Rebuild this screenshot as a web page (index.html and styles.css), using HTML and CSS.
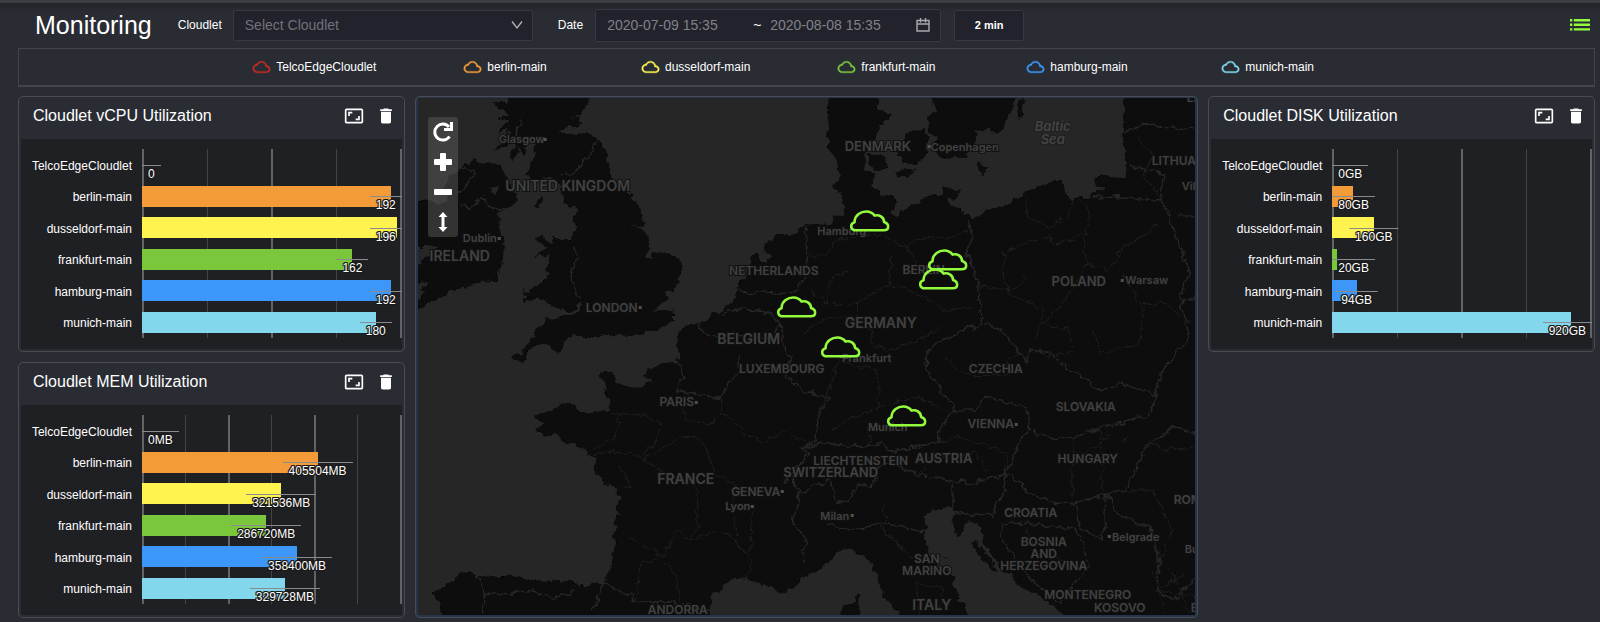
FILE: index.html
```html
<!DOCTYPE html>
<html lang="en">
<head>
<meta charset="utf-8">
<title>Monitoring</title>
<link rel="stylesheet" href="styles.css">
</head>
<body>
<svg class="sprite" aria-hidden="true">
  <symbol id="cloud" viewBox="-1 0 26 24"><path stroke="currentColor" stroke-width=".5" d="M19.35 10.04C18.67 6.59 15.64 4 12 4 9.11 4 6.6 5.64 5.35 8.04 2.34 8.36 0 10.91 0 14c0 3.31 2.69 6 6 6h13c2.76 0 5-2.24 5-5 0-2.64-2.05-4.78-4.65-4.96zM19 18H6c-2.21 0-4-1.79-4-4s1.79-4 4-4h.71C7.37 7.69 9.48 6 12 6c3.04 0 5.5 2.46 5.5 5.5v.5H19c1.66 0 3 1.34 3 3s-1.34 3-3 3z"/></symbol>
  <symbol id="expand" viewBox="0 0 24 24"><path d="M19 12h-2v3h-3v2h5v-5zM7 9h3V7H5v5h2V9zm14-6H3c-1.1 0-2 .9-2 2v14c0 1.1.9 2 2 2h18c1.1 0 2-.9 2-2V5c0-1.1-.9-2-2-2zm0 16.01H3V4.99h18v14.02z"/></symbol>
  <symbol id="trash" viewBox="0 0 24 24"><path d="M6 19c0 1.1.9 2 2 2h8c1.1 0 2-.9 2-2V7H6v12zM19 4h-3.5l-1-1h-5l-1 1H5v2h14V4z"/></symbol>
  <symbol id="pin" viewBox="0 0 40 22"><path d="M6.500 20.300C.5 20.300-.2 14 4.800 12.200L4.900 10.700C5.600 5 11 1.500 16.500 1.500 20 1.500 23 3 24.800 5.600 29 4.200 34.300 6.800 34.300 12 40.300 14 39.500 20.300 34 20.300Z" fill="none" stroke="#93fb3d" stroke-width="2.600" stroke-linejoin="round"/></symbol>
</svg>

<header class="toolbar">
  <h1 class="title">Monitoring</h1>
  <div class="field">
    <label for="cloudlet">Cloudlet</label>
    <div class="select-box">
      <select id="cloudlet"><option>Select Cloudlet</option></select>
      <svg class="chevron" viewBox="0 0 12 10"><path d="M1 1.500 6 8 11 1.500" fill="none" stroke="#b5b5ba" stroke-width="1.300"/></svg>
    </div>
  </div>
  <div class="field">
    <label for="from">Date</label>
    <div class="range">
      <input id="from" type="text" value="2020-07-09 15:35">
      <span class="tilde">~</span>
      <input type="text" aria-label="End date" value="2020-08-08 15:35">
      <svg class="calendar" viewBox="0 0 14 14"><path d="M1 2.500h12v10.500H1zM1 6h12M4.500 0v4.500M9.500 0v4.500" fill="none" stroke="#a9a9ad" stroke-width="1.400"/></svg>
    </div>
  </div>
  <button class="interval" type="button">2 min</button>
  <button class="menu" type="button" aria-label="Menu">
    <svg viewBox="0 0 20 12"><path d="M0 0h2.300v2.400H0zM3.800 0H20v2.400H3.800zM0 4.600h2.300V7H0zM3.800 4.600H20V7H3.800zM0 9.200h2.300v2.400H0zM3.800 9.200H20v2.400H3.800z"/></svg>
  </button>
</header>

<main class="page">
  <ul class="legend">
    <li><svg class="telco"><use href="#cloud"/></svg>TelcoEdgeCloudlet</li>
    <li><svg class="berlin"><use href="#cloud"/></svg>berlin-main</li>
    <li><svg class="dusseldorf"><use href="#cloud"/></svg>dusseldorf-main</li>
    <li><svg class="frankfurt"><use href="#cloud"/></svg>frankfurt-main</li>
    <li><svg class="hamburg"><use href="#cloud"/></svg>hamburg-main</li>
    <li><svg class="munich"><use href="#cloud"/></svg>munich-main</li>
  </ul>

  <div class="board">
    <section class="card">
      <div class="card-head">
        <h2>Cloudlet vCPU Utilization</h2>
        <button type="button" aria-label="Expand"><svg><use href="#expand"/></svg></button>
        <button type="button" aria-label="Delete"><svg><use href="#trash"/></svg></button>
      </div>
      <div class="chart">
        <div class="names"><span>TelcoEdgeCloudlet</span><span>berlin-main</span><span>dusseldorf-main</span><span>frankfurt-main</span><span>hamburg-main</span><span>munich-main</span></div>
        <div class="plot">
          <div class="grid-lines"><i></i><i></i><i></i><i></i></div>
          <div class="row"><b class="at-start">0</b></div>
          <div class="row"><div class="bar berlin" style="width:96%"></div><b class="at-end">192</b></div>
          <div class="row"><div class="bar dusseldorf" style="width:98%"></div><b class="at-end">196</b></div>
          <div class="row"><div class="bar frankfurt" style="width:81%"></div><b style="left:81%">162</b></div>
          <div class="row"><div class="bar hamburg" style="width:96%"></div><b class="at-end">192</b></div>
          <div class="row"><div class="bar munich" style="width:90%"></div><b style="left:90%">180</b></div>
        </div>
      </div>
    </section>

    <section class="map" aria-label="Map">
      <svg class="map-art" viewBox="0 0 778 517" preserveAspectRatio="xMidYMid slice">
        <defs>
          <filter id="rough" x="0" y="0" width="100%" height="100%">
            <feTurbulence type="fractalNoise" baseFrequency="0.12" numOctaves="3" seed="4" result="n"/>
            <feDisplacementMap in="SourceGraphic" in2="n" scale="9" xChannelSelector="R" yChannelSelector="G"/>
          </filter>
        </defs>
        <rect width="778" height="517" fill="#262626"/>
        <g filter="url(#rough)">
        <g transform="scale(.33333) translate(-24 -24)">
          <g fill="#080808">
            <path d="M300 0 285 40 250 38 285 62 300 72 265 88 300 95 275 110 262 130 300 118 290 150 268 165 255 178 290 170 305 140 325 105 350 60 332 105 314 140 318 165 302 205 315 212 330 165 338 205 350 190 345 160 365 155 380 190 365 215 358 240 345 260 365 272 400 262 440 270 455 290 452 318 475 345 502 350 500 375 488 385 500 420 480 448 430 445 420 462 405 470 385 450 375 438 400 435 420 460 400 480 375 500 420 492 412 540 420 555 395 580 340 605 350 620 345 635 400 625 430 650 470 665 500 650 530 625 500 665 480 680 410 683 405 705 385 715 370 745 330 785 300 803 345 815 365 775 395 755 420 765 445 790 460 770 460 750 490 738 530 745 575 735 600 735 610 748 625 735 680 738 735 718 770 708 795 690 795 665 760 660 725 662 750 645 775 625 768 612 800 590 818 540 812 510 775 490 735 488 720 505 703 495 722 470 718 440 695 415 650 403 705 410 690 355 660 310 605 265 590 180 555 145 515 125 500 135 440 125 475 115 520 100 505 80 480 95 520 60 548 10Z"/>
            <path d="M0 332 60 335 90 345 110 330 105 300 125 255 160 230 195 208 220 220 270 222 290 250 290 275 320 310 320 335 290 360 265 370 275 385 268 410 285 480 270 540 262 572 200 575 180 590 130 600 90 625 0 665 0 640 50 605 24 600 60 575 0 580 0 535 45 510 80 470 0 465Z"/>
            <path d="M370 360 382 330 400 318 398 340Z"/>
            <path d="M1260 0 1255 180 1275 200 1290 265 1270 290 1300 330 1308 380 1270 380 1265 400 1190 405 1150 430 1100 435 1070 460 1068 490 1085 498 1070 520 1040 490 1025 505 1020 525 1005 560 975 600 985 620 955 640 930 665 900 680 870 698 815 715 805 740 805 805 775 818 710 840 705 865 735 870 690 888 650 885 620 880 605 845 570 848 580 875 590 895 597 945 605 958 565 960 515 970 490 940 440 950 375 975 375 985 405 1000 380 1018 405 1040 440 1035 480 1060 540 1080 528 1090 555 1105 555 1140 580 1175 620 1195 630 1230 615 1250 640 1275 620 1270 612 1370 600 1440 580 1480 530 1483 450 1470 400 1475 300 1458 200 1460 170 1445 140 1455 130 1475 65 1510 80 1525 90 1545 105 1600 900 1600 905 1520 940 1490 975 1460 1010 1470 1050 1480 1110 1505 1150 1495 1170 1468 1225 1440 1270 1400 1300 1377 1340 1385 1385 1420 1400 1450 1415 1490 1418 1520 1450 1550 1490 1600 1690 1600 1640 1510 1630 1460 1560 1395 1540 1340 1555 1310 1535 1285 1560 1265 1610 1250 1640 1265 1625 1290 1630 1310 1650 1340 1680 1285 1710 1310 1720 1350 1760 1420 1820 1470 1880 1510 1990 1600 2380 1600 2380 0 2140 0 2140 150 2150 225 2150 260 2060 262 2060 290 2090 290 2030 325 1980 325 1965 300 1955 270 1910 280 1850 305 1805 340 1730 365 1685 385 1640 350 1610 340 1625 310 1600 310 1550 320 1510 345 1470 370 1440 375 1460 350 1455 320 1410 310 1385 285 1395 250 1365 240 1360 200 1390 160 1405 125 1410 100 1440 90 1445 70 1405 60 1400 0Z"/>
            <path d="M1555 0 1580 60 1555 80 1555 115 1580 145 1570 180 1600 207 1670 200 1700 150 1695 120 1775 125 1800 70 1830 0ZM1490 130 1540 118 1560 135 1550 175 1545 205 1520 225 1480 220 1465 190 1490 160ZM1375 190 1425 200 1435 235 1405 240 1375 220ZM1455 245 1515 235 1500 265 1460 262ZM1705 218 1735 235 1725 250 1705 240ZM1828 90 1822 50 1840 20 1850 30ZM1290 1575 1300 1548 1340 1538 1335 1513 1348 1510 1350 1600ZM1600 290 1650 300 1640 330 1600 325Z"/>
            <path d="M1680 1360 1700 1350 1760 1440 1750 1445ZM1800 1460 1860 1490 1890 1515 1850 1500Z"/>
          </g>
          <g fill="#262626"><path d="M245 290 270 285 262 308 248 305ZM2120 1062 2150 1045 2180 1030 2150 1048Z"/></g>
          <g fill="none" stroke="#262626" stroke-width="5" stroke-linejoin="round">
            <path d="M150 345 185 355 215 320 240 355 290 365M160 230 195 250 165 290 145 310M455 255 490 250 545 190 555 150M490 470 510 500 485 530 490 590 515 630"/>
            <path d="M1190 410 1192 490 1180 570 1150 610 1040 610 975 600M870 700 880 735 950 740 1010 735 1085 745 1110 700 1080 670 1010 655 935 670M1110 700 1120 760 1145 800 1130 865 1190 905 1260 925 1230 960 1215 1060 1170 1075 1200 1090 1120 1180 1140 1160 1170 1200 1150 1300 1190 1350 1180 1420M795 800 820 860 800 905 870 910 935 925 955 880 985 850 985 800"/>
            <path d="M1180 1075 1250 1060 1350 1070 1420 1060 1440 1080 1500 1075 1585 1055 1590 1020 1620 970 1640 960 1550 840 1550 800M1170 1210 1260 1170 1280 1240 1320 1230 1340 1180 1390 1190 1410 1120 1450 1120 1530 1155 1640 1175 1690 1180 1790 1150 1830 1050 1860 1020 1850 955 1780 930 1725 920 1700 960 1640 960"/>
            <path d="M1675 390 1685 430 1670 490 1700 560 1710 650 1720 690 1690 720 1690 705 1620 740 1560 770 1550 800M1720 700 1770 720 1820 770 1850 820 1860 780 1920 790 1970 830 2020 860 2070 900 2130 880 2240 915 2215 975 2080 1010 2000 1040 1910 1045 1870 1020M2240 915 2250 850 2340 740 2310 620 2340 550 2300 440 2260 330 2050 320M2255 330 2260 250 2155 225M2140 130 2200 100 2270 115 2360 115M2305 378 2360 378M2310 640 2360 620"/>
            <path d="M1790 1150 1850 1200 1920 1240 1990 1240 2100 1210 2150 1200 2210 1070 2290 1010 2360 1030M1630 1180 1630 1270 1750 1275 1780 1210 1790 1150M1780 1300 1850 1300 2000 1320 2020 1360 2040 1430 2000 1470 1950 1540 1900 1500 1850 1450 1780 1360 1775 1300M2000 1240 2010 1310 2080 1350 2090 1210M2090 1210 2130 1280 2220 1310 2250 1420 2240 1500 2290 1530 2360 1460"/>
            <path d="M580 1480 640 1510 690 1535 770 1535 850 1550 905 1560M200 1460 225 1510 215 1570M225 1515 300 1510 370 1500 430 1525 500 1500M550 1560 580 1480M1250 1300 1310 1320 1430 1300 1530 1325 1550 1320"/>
          </g>
          <g fill="none" stroke="#1c1c1c" stroke-width="4" stroke-linejoin="round">
            <path d="M605 970 700 975 755 1000 740 1050 700 1100 600 1085 540 1095M625 970 620 1040 550 1080M700 1105 830 1035 890 1065 910 1150 970 1180 965 1250 985 1340M700 1105 750 1145 850 1180 870 1240 860 1320 840 1350 800 1320 760 1400 690 1420 680 1530M760 1405 800 1460 810 1540M860 1350 900 1330 950 1330 1010 1390 1025 1420 1010 1470M1020 1390 1030 1250M935 920 935 970 900 1005 830 985 810 930M940 970 1010 1030 1060 1060 1120 1020 1200 1060M635 1125 660 1190 620 1195M655 1340 760 1400"/>
            <path d="M1190 490 1240 500 1280 450 1370 435 1430 440 1500 480 1520 520M1450 500 1440 580 1340 640 1250 640 1190 590M1340 640 1340 690 1270 680 1180 730M1440 580 1560 625 1600 660 1700 650M1250 650 1270 560 1310 545M1490 480 1510 450 1640 440 1675 420M1380 690 1390 770 1440 780 1530 750 1600 710M1300 820 1400 840 1410 950 1300 1000 1260 1025M1230 960 1260 900 1290 800M1370 990 1380 1060M1410 950 1530 920 1600 960"/>
            <path d="M1850 305 1850 380 1920 410 1975 380 1990 330M1785 480 1780 580 1820 620 1900 660 1880 740M1790 480 1910 440 1950 460 2030 430 2040 350 2010 330M2020 440 2030 520 2100 540 2140 470 2260 400M2030 520 1960 640 1900 700M2140 550 2200 660 2190 760 2070 790 2050 720M1900 700 1980 720 1990 790 1900 800M1700 590 1800 600 1850 560M2190 640 2270 640 2340 700M2260 330 2200 260 2230 200 2180 140M1600 800 1680 860 1760 860 1850 840M1760 850 1830 790 1800 750"/>
            <path d="M1990 1050 1990 1220M2070 1000 2080 1200M1990 1110 2100 1040M1580 1060 1640 1040 1720 1060 1790 1090 1790 1140M1530 1155 1560 1110 1700 1090 1730 1150M2150 1200 2230 1200 2290 1320 2250 1400M2200 1060 2280 1080 2360 1070M2240 1500 2330 1450M1420 1230 1430 1300M1400 1300 1500 1400 1620 1400M1530 1575 1520 1480 1600 1490 1590 1570M1850 1320 1890 1400 2020 1420M2230 1440 2270 1570M2280 1430 2340 1570M2230 1500 2360 1520"/>
          </g>
        </g>
        </g>
        <g class="country">
          <text x="150" y="93" class="large">UNITED KINGDOM</text><text x="42" y="163" class="large">IRELAND</text>
          <text x="194" y="214">LONDON</text><text x="356" y="177">NETHERLANDS</text>
          <text x="331" y="246" class="large">BELGIUM</text><text x="460" y="53" class="medium">DENMARK</text>
          <text x="661" y="188" class="medium">POLAND</text><text x="463" y="230" class="large">GERMANY</text>
          <text x="578" y="275">CZECHIA</text><text x="364" y="275">LUXEMBOURG</text>
          <text x="668" y="313">SLOVAKIA</text><text x="573" y="330">VIENNA</text>
          <text x="443" y="367">LIECHTENSTEIN</text><text x="413" y="379" class="medium">SWITZERLAND</text>
          <text x="526" y="365" class="medium">AUSTRIA</text><text x="670" y="365">HUNGARY</text>
          <text x="259" y="308">PARIS</text><text x="268" y="386" class="large">FRANCE</text>
          <text x="338" y="398">GENEVA</text><text x="613" y="419">CROATIA</text>
          <text x="626" y="448">BOSNIA</text><text x="626" y="460">AND</text><text x="626" y="472">HERZEGOVINA</text>
          <text x="509" y="465">SAN</text><text x="509" y="477">MARINO</text>
          <text x="514" y="512" class="large">ITALY</text><text x="670" y="501">MONTENEGRO</text>
          <text x="702" y="514">KOSOVO</text><text x="260" y="516">ANDORRA</text><text x="506" y="176">BERLIN</text>
          <text x="734" y="67" class="cut">LITHUANIA</text><text x="769" y="4" class="cut">LATVIA</text>
          <text x="756" y="406" class="cut">ROMANIA</text><text x="773" y="514" class="cut">BULGARIA</text>
        </g>
        <g class="city">
          <text x="104" y="45">Glasgow</text><text x="62" y="144">Dublin</text><text x="547" y="53">Copenhagen</text>
          <text x="424" y="137">Hamburg</text><text x="729" y="186">Warsaw</text><text x="449" y="264">Frankfurt</text>
          <text x="470" y="333">Munich</text><text x="320" y="412">Lyon</text><text x="417" y="422">Milan</text>
          <text x="718" y="443">Belgrade</text><text x="764" y="92" class="cut">Vilnius</text><text x="767" y="455" class="cut">Bucharest</text>
        </g>
        <g class="sea"><text x="635" y="33">Baltic</text><text x="635" y="46">Sea</text></g>
        <path fill="#505050" d="M126 40h3v3h-3zM80 139h3v3h-3zM221 208h3v3h-3zM510 47h3v3h-3zM703 181h3v3h-3zM597 325h3v3h-3zM277 303h3v3h-3zM363 392h3v3h-3zM333 407h3v3h-3zM433 416h3v3h-3zM690 437h3v3h-3zM422 257h3v3h-3z"/>
        <use href="#pin" x="432" y="112" width="40" height="22"/>
        <use href="#pin" x="510" y="151" width="40" height="22"/>
        <use href="#pin" x="501" y="170" width="40" height="22"/>
        <use href="#pin" x="359" y="198" width="40" height="22"/>
        <use href="#pin" x="403" y="238" width="40" height="22"/>
        <use href="#pin" x="469" y="307" width="40" height="22"/>
      </svg>
      <div class="map-tools">
        <button type="button" aria-label="Reset"><svg viewBox="0 0 20 20"><path d="M16.500 14.500A8 8 0 1 1 16 5" fill="none" stroke="#fff" stroke-width="3"/><path d="M17 0h3v9h-9V6h6z"/></svg></button>
        <button type="button" aria-label="Zoom in"><svg viewBox="0 0 20 20"><path d="M8 1h4a1 1 0 0 1 1 1v5h5a1 1 0 0 1 1 1v4a1 1 0 0 1-1 1h-5v5a1 1 0 0 1-1 1H8a1 1 0 0 1-1-1v-5H2a1 1 0 0 1-1-1V8a1 1 0 0 1 1-1h5V2a1 1 0 0 1 1-1z"/></svg></button>
        <button type="button" aria-label="Zoom out"><svg viewBox="0 0 20 20"><rect x="1" y="7" width="18" height="6" rx="1"/></svg></button>
        <button type="button" aria-label="Tilt"><svg viewBox="0 0 20 20"><path d="M10 0l4.500 5h-3v10h3L10 20l-4.500-5h3V5h-3z"/></svg></button>
      </div>
    </section>

    <section class="card">
      <div class="card-head">
        <h2>Cloudlet DISK Utilization</h2>
        <button type="button" aria-label="Expand"><svg><use href="#expand"/></svg></button>
        <button type="button" aria-label="Delete"><svg><use href="#trash"/></svg></button>
      </div>
      <div class="chart">
        <div class="names"><span>TelcoEdgeCloudlet</span><span>berlin-main</span><span>dusseldorf-main</span><span>frankfurt-main</span><span>hamburg-main</span><span>munich-main</span></div>
        <div class="plot">
          <div class="grid-lines"><i></i><i></i><i></i><i></i></div>
          <div class="row"><b class="at-start">0GB</b></div>
          <div class="row"><div class="bar berlin" style="width:8%"></div><b class="at-start">80GB</b></div>
          <div class="row"><div class="bar dusseldorf" style="width:16%"></div><b style="left:16%">160GB</b></div>
          <div class="row"><div class="bar frankfurt" style="width:2%"></div><b class="at-start">20GB</b></div>
          <div class="row"><div class="bar hamburg" style="width:9.4%"></div><b style="left:9.4%">94GB</b></div>
          <div class="row"><div class="bar munich" style="width:92%"></div><b class="at-end">920GB</b></div>
        </div>
      </div>
    </section>

    <section class="card">
      <div class="card-head">
        <h2>Cloudlet MEM Utilization</h2>
        <button type="button" aria-label="Expand"><svg><use href="#expand"/></svg></button>
        <button type="button" aria-label="Delete"><svg><use href="#trash"/></svg></button>
      </div>
      <div class="chart">
        <div class="names"><span>TelcoEdgeCloudlet</span><span>berlin-main</span><span>dusseldorf-main</span><span>frankfurt-main</span><span>hamburg-main</span><span>munich-main</span></div>
        <div class="plot">
          <div class="grid-lines"><i></i><i></i><i></i><i></i><i></i><i></i></div>
          <div class="row"><b class="at-start">0MB</b></div>
          <div class="row"><div class="bar berlin" style="width:67.6%"></div><b style="left:67.6%">405504MB</b></div>
          <div class="row"><div class="bar dusseldorf" style="width:53.6%"></div><b style="left:53.6%">321536MB</b></div>
          <div class="row"><div class="bar frankfurt" style="width:47.8%"></div><b style="left:47.8%">286720MB</b></div>
          <div class="row"><div class="bar hamburg" style="width:59.7%"></div><b style="left:59.7%">358400MB</b></div>
          <div class="row"><div class="bar munich" style="width:55%"></div><b style="left:55%">329728MB</b></div>
        </div>
      </div>
    </section>
  </div>
</main>
</body>
</html>
```
FILE: styles.css
```css
* { box-sizing: border-box; }

body {
  margin: 0;
  background: #292c33;
  color: #fff;
  font-family: "Liberation Sans", Arial, sans-serif;
  font-size: 12px;
}

button {
  margin: 0;
  padding: 0;
  border: 0;
  background: none;
  color: inherit;
  font: inherit;
  cursor: pointer;
}

svg { display: block; fill: currentColor; }
.sprite { position: absolute; width: 0; height: 0; }

/* Toolbar */
.toolbar {
  display: flex;
  align-items: center;
  height: 48px;
  padding: 0 10px 1px 35px;
  border-top: 3px solid #3b3e43;
  background: linear-gradient(#202328, #292c33 8px);
}
.title { margin: 0 26px 0 0; font-size: 25px; font-weight: 400; line-height: 30px; }
.field { display: flex; align-items: center; gap: 11px; margin-right: 25px; }
.field + .field { gap: 12px; margin-right: 13px; }

.select-box { position: relative; width: 300px; }
.select-box select {
  display: block;
  width: 100%;
  height: 31px;
  padding: 0 11px;
  border: 1px solid #383843;
  border-radius: 2px;
  appearance: none;
  background: #22222c;
  color: #717178;
  font: 14px "Liberation Sans", Arial, sans-serif;
}
.chevron { position: absolute; top: 10px; right: 10px; width: 12px; height: 10px; pointer-events: none; }

.range {
  display: flex;
  align-items: center;
  width: 346px;
  height: 33px;
  padding: 0 10px 0 11px;
  border: 1px solid #383843;
  border-radius: 2px;
  background: #22222c;
}
.range input {
  flex: 1;
  min-width: 0;
  padding: 0;
  border: 0;
  background: none;
  color: #818187;
  font: 14px "Liberation Sans", Arial, sans-serif;
}
.tilde { width: 17px; font-size: 14px; }
.calendar { width: 14px; height: 14px; }
.interval {
  width: 70px;
  height: 31px;
  border: 1px solid #383843;
  border-radius: 2px;
  background: #22222c;
  font-size: 11px;
  font-weight: 700;
}
.menu { margin-left: auto; color: #93fb3d; }
.menu svg { width: 20px; height: 12px; }

/* Series colours */
.telco { color: #c22d22; }
.berlin { color: #f29b38; }
.dusseldorf { color: #fff350; }
.frankfurt { color: #7ac73c; }
.hamburg { color: #3d97f8; }
.munich { color: #82d7ec; }

.page { padding: 0 5px 4px 18px; }

.legend {
  display: grid;
  grid-template-columns: repeat(6, 1fr);
  align-items: center;
  height: 39px;
  margin: 0 0 9px;
  padding: 0 231px 0 200px;
  border: 1px solid #434548;
  border-bottom-width: 2px;
  list-style: none;
}
.legend li { display: flex; align-items: center; justify-content: center; gap: 5px; }
.legend svg { width: 19px; height: 18px; }

/* Board */
.board {
  display: grid;
  grid-template-columns: 387fr 784fr 387fr;
  grid-template-rows: auto auto;
  gap: 10px;
}
.card {
  min-width: 0;
  padding: 2px;
  border: 1px solid #4a4c51;
  border-radius: 5px;
}
.card-head {
  display: flex;
  align-items: center;
  gap: 12px;
  height: 40px;
  padding: 0 6px 6px 12px;
}
.card-head h2 { flex: 1; margin: 0; font-size: 16px; font-weight: 400; }
.card-head svg { width: 20px; height: 20px; }

.chart { display: flex; height: 210px; padding: 10px 0 11px; background: #1f2024; }
.names { display: grid; grid-auto-rows: 1fr; width: 121px; padding-right: 10px; text-align: right; }
.names span { align-self: center; padding-top: 2px; }
.plot { position: relative; display: grid; grid-auto-rows: 1fr; flex: 1; }
.grid-lines { position: absolute; inset: 0; display: flex; border-left: 2px solid #626364; }
.grid-lines i { flex: 1; border-right: 1px solid #434447; }
.grid-lines i:nth-child(even) { border-right: 2px solid #626364; }
.row { position: relative; display: flex; align-items: center; }
.bar { height: 21px; background: currentColor; }
.row b {
  position: absolute;
  top: 50%;
  padding: 1px 6px 0;
  border-top: 1px solid #8a8b8d;
  transform: translateX(-50%);
  color: #fff;
  font-weight: 400;
  line-height: 14px;
  text-shadow: 1px 0 #191919, -1px 0 #191919, 0 1px #191919, 0 -1px #191919, 1px 1px #191919, -1px -1px #191919, 1px -1px #191919, -1px 1px #191919;
}
.row .at-start { left: 0; transform: none; }
.row .at-end { right: 0; transform: none; }

/* Map */
.map {
  position: relative;
  grid-row: span 2;
  min-width: 0;
  padding: 1px 2px 2px;
  border: 1px solid #4a4c51;
  border-radius: 5px;
  background: #26344b;
  overflow: hidden;
}
.map-art { width: 100%; height: 100%; }
.map-art text {
  fill: #414141;
  stroke: #111;
  stroke-width: 2px;
  paint-order: stroke;
  text-anchor: middle;
  font-family: Inter, "Open Sans", sans-serif;
  font-size: 12px;
  font-weight: 600;
}
.map-art .medium { font-size: 13px; }
.map-art .large { font-size: 14px; }
.map-art .city text { font-size: 11px; }
.map-art .sea text { fill: #444; stroke: #202020; font-size: 13px; font-style: italic; }
.map-art text.cut { text-anchor: start; }
.map-tools {
  position: absolute;
  top: 20px;
  left: 12px;
  display: grid;
  grid-auto-rows: 30px;
  width: 30px;
  border-radius: 3px;
  background: rgba(90, 90, 90, .5);
}
.map-tools button { display: grid; place-items: center; }
.map-tools svg { width: 20px; height: 20px; }
```
